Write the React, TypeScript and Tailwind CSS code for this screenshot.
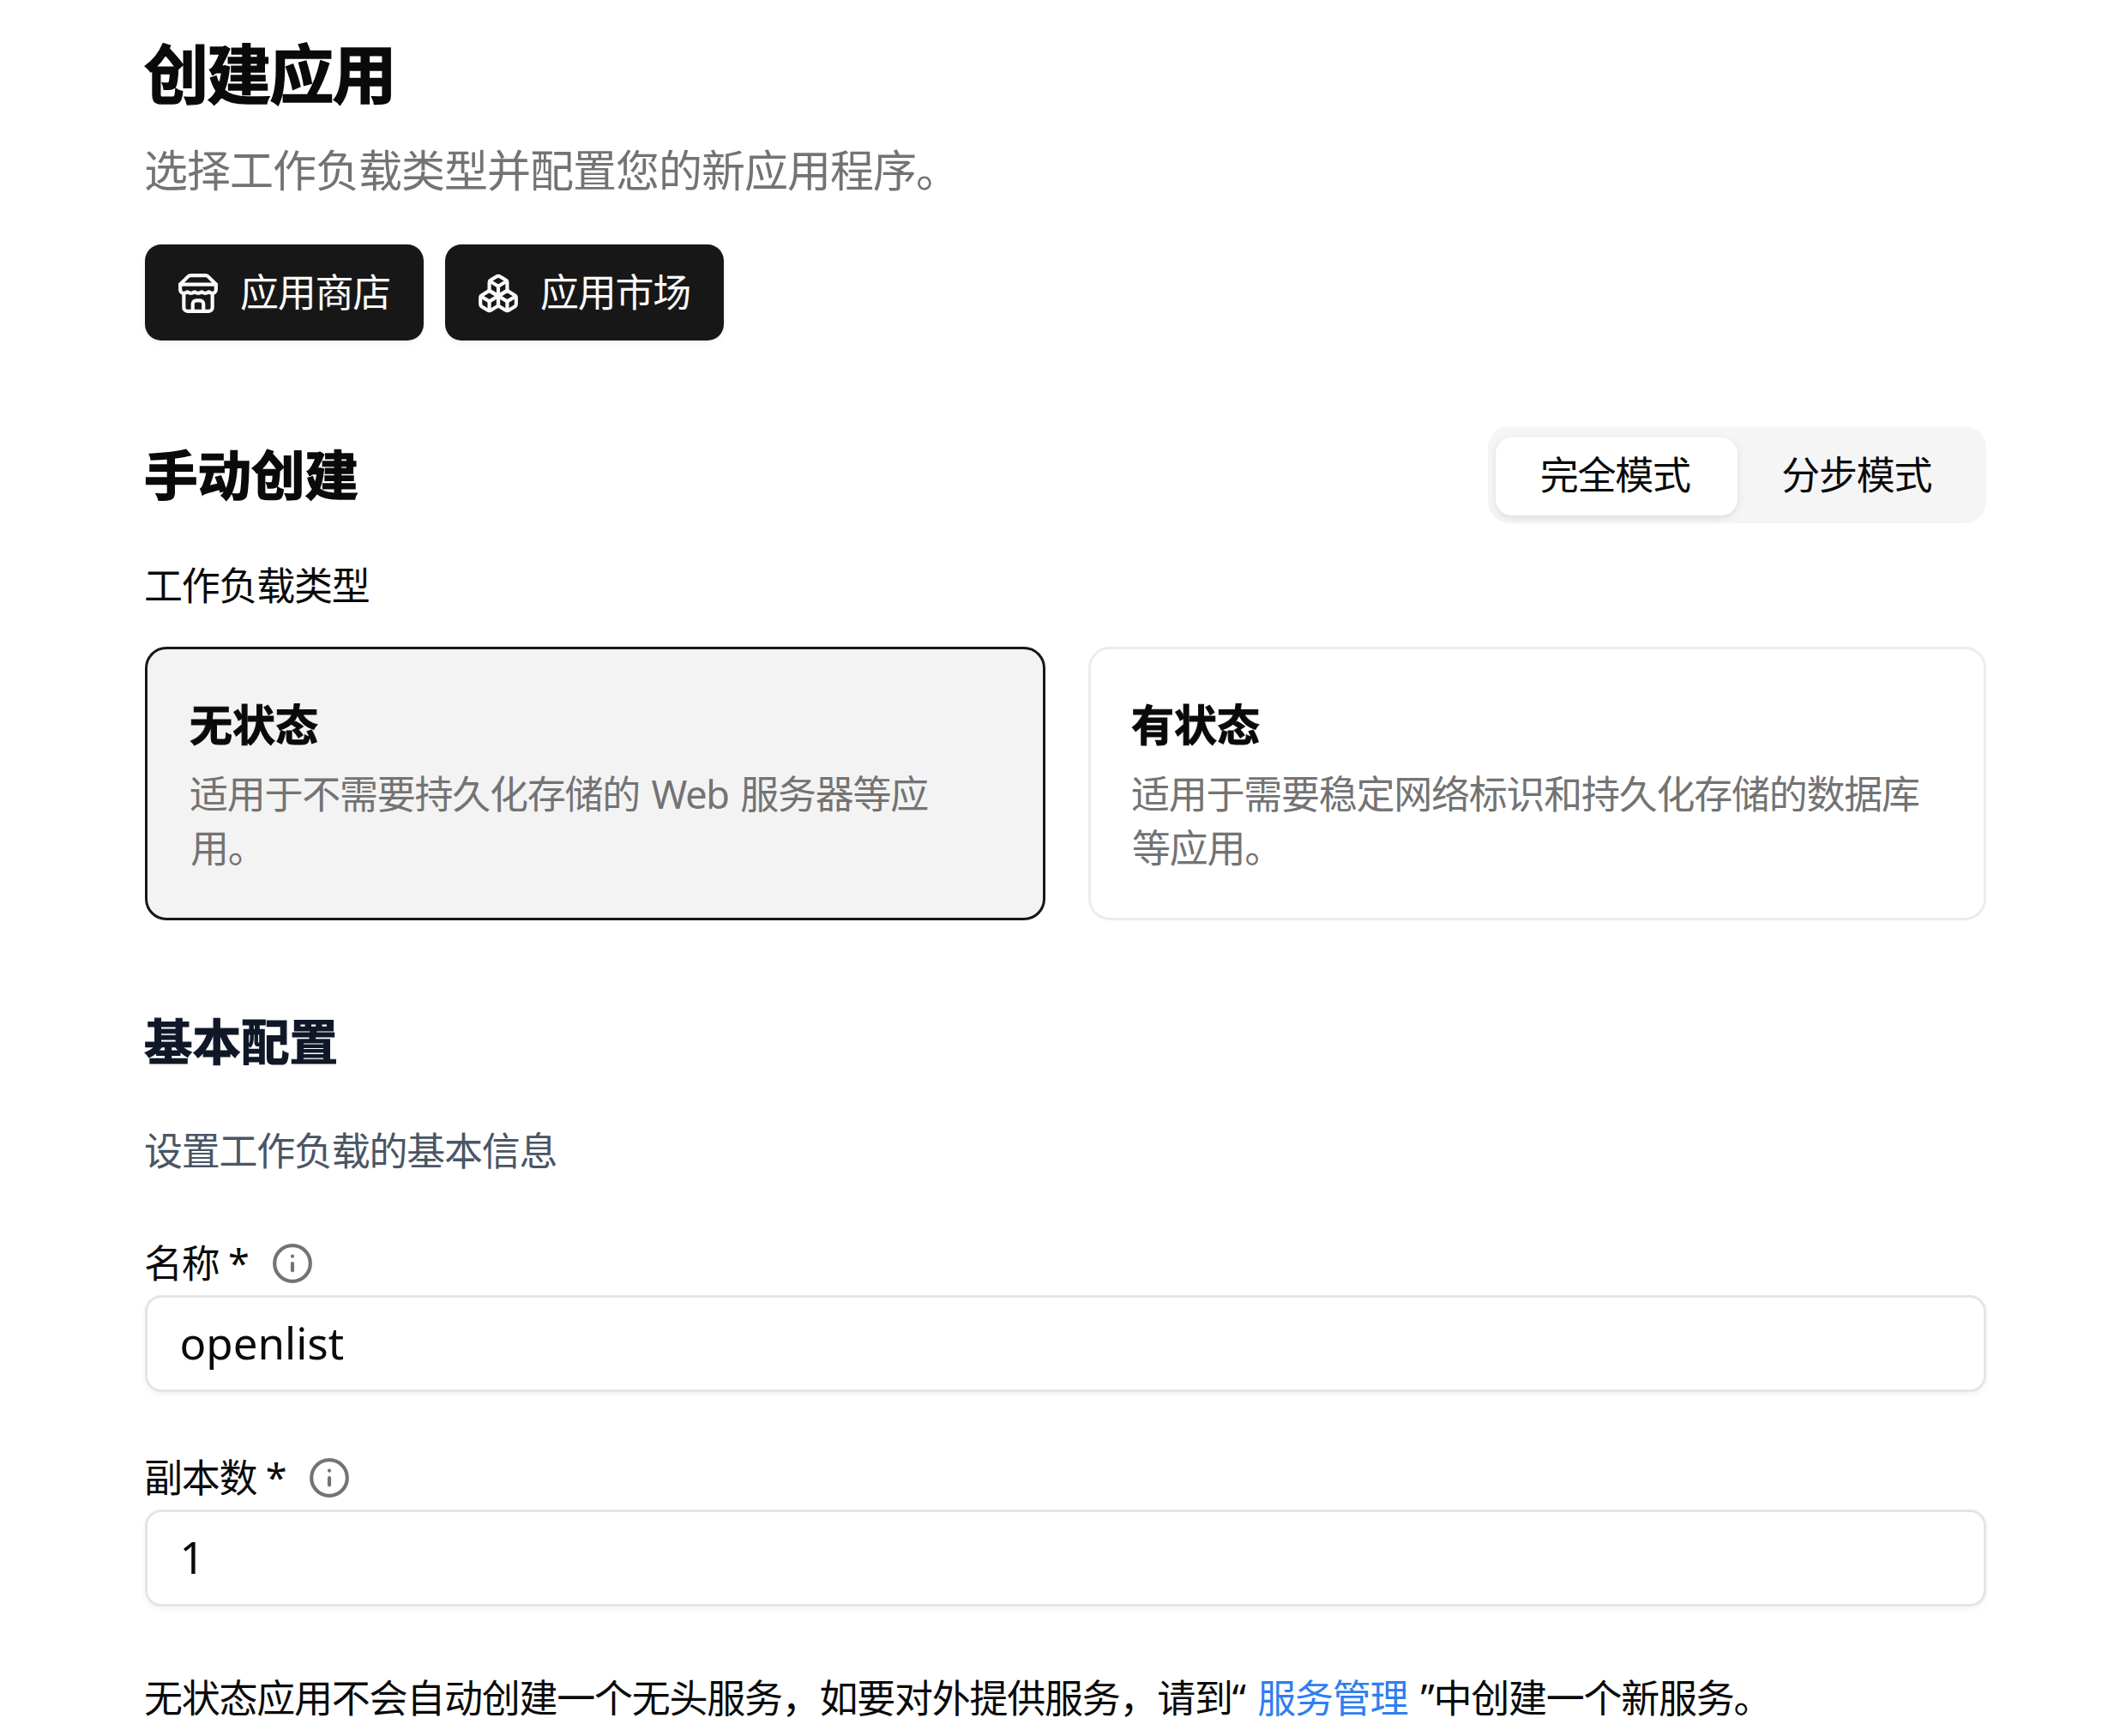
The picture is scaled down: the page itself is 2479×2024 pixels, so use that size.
import { useState } from "react";
import type { ReactNode } from "react";
import { Boxes, Info } from "lucide-react";

const workloadTypes = [
  {
    id: "stateless",
    title: "无状态",
    description: "适用于不需要持久化存储的 Web 服务器等应用。",
  },
  {
    id: "stateful",
    title: "有状态",
    description: "适用于需要稳定网络标识和持久化存储的数据库等应用。",
  },
];

const modes = ["完全模式", "分步模式"];

function StoreIcon() {
  return (
    <svg
      viewBox="0 0 24 24"
      fill="none"
      stroke="currentColor"
      strokeWidth="2"
      strokeLinecap="round"
      strokeLinejoin="round"
      className="size-[50px]"
    >
      <path d="m2 7 4.41-4.41A2 2 0 0 1 7.83 2h8.34a2 2 0 0 1 1.42.59L22 7" />
      <path d="M4 12v8a2 2 0 0 0 2 2h12a2 2 0 0 0 2-2v-8" />
      <path d="M15 22v-4a2 2 0 0 0-2-2h-2a2 2 0 0 0-2 2v4" />
      <path d="M2 7h20" />
      <path d="M22 7v3a2 2 0 0 1-2 2a2.7 2.7 0 0 1-1.59-.63.7.7 0 0 0-.82 0A2.7 2.7 0 0 1 16 12a2.7 2.7 0 0 1-1.59-.63.7.7 0 0 0-.82 0A2.7 2.7 0 0 1 12 12a2.7 2.7 0 0 1-1.59-.63.7.7 0 0 0-.82 0A2.7 2.7 0 0 1 8 12a2.7 2.7 0 0 1-1.59-.63.7.7 0 0 0-.82 0A2.7 2.7 0 0 1 4 12a2 2 0 0 1-2-2V7" />
    </svg>
  );
}

function StoreButton({ icon, children }: { icon: ReactNode; children: ReactNode }) {
  return (
    <button className="flex h-[112px] w-[325px] items-center gap-[24px] rounded-[19px] bg-neutral-900 pt-px pl-[37px] text-[45px] leading-[62.5px] tracking-[-1.25px] whitespace-nowrap text-neutral-50 shadow-[0_3px_6px_rgba(0,0,0,0.05)]">
      {icon}
      {children}
    </button>
  );
}

function Field({ label, value }: { label: string; value: string }) {
  return (
    <div className="flex flex-col gap-[12px]">
      <div className="flex h-[50px] items-center gap-[26px]">
        <label className="text-[45px] leading-[50px] tracking-[-1.25px]">{label} *</label>
        <Info size={50} strokeWidth={2} className="text-neutral-500" />
      </div>
      <input
        defaultValue={value}
        className="h-[112.5px] w-full rounded-[19px] border-[3px] border-neutral-200 bg-white px-[37.5px] pb-[4px] indent-0 text-[51px] shadow-[0_3px_6px_rgba(0,0,0,0.05)] outline-none"
      />
    </div>
  );
}

export default function App() {
  const [mode, setMode] = useState(modes[0]);
  const [type, setType] = useState("stateless");

  return (
    <main className="h-[2024px] w-[2479px] overflow-hidden bg-white pt-[36px] pr-[163px] pl-[169px] indent-[-1px] font-['Noto_Sans','Noto_Sans_CJK_SC',sans-serif] text-neutral-950">
      <h1 className="text-[75px] leading-[100px] font-bold tracking-tight [-webkit-text-stroke:1.5px]">
        创建应用
      </h1>
      <p className="mt-[25px] text-[51px] leading-[75px] tracking-[-1px] text-neutral-500">
        选择工作负载类型并配置您的新应用程序。
      </p>
      <div className="mt-[49px] flex gap-[25px]">
        <StoreButton icon={<StoreIcon />}>应用商店</StoreButton>
        <StoreButton icon={<Boxes size={50} />}>应用市场</StoreButton>
      </div>

      <div className="mt-[100px] flex h-[112.5px] items-center justify-between">
        <h2 className="text-[62.5px] leading-[87.5px] font-bold [-webkit-text-stroke:1.5px]">
          手动创建
        </h2>
        <div className="flex h-full w-[581px] items-center rounded-[25px] bg-neutral-100 px-[9px]">
          {modes.map((item) => (
            <button
              key={item}
              onClick={() => setMode(item)}
              className={`mt-[4px] flex h-[91px] flex-1 items-center justify-center rounded-[19px] pr-[3px] pb-[3px] text-[45px] tracking-[-1.25px] ${
                mode === item ? "bg-white shadow-[0_3px_9px_rgba(0,0,0,0.1)]" : ""
              }`}
            >
              {item}
            </button>
          ))}
        </div>
      </div>

      <div className="mt-[51px] text-[45px] leading-[43.75px] tracking-[-1.25px]">工作负载类型</div>
      <div className="mt-[50px] grid grid-cols-[1050px_1fr] gap-[50px]">
        {workloadTypes.map((item) => (
          <div
            key={item.id}
            onClick={() => setType(item.id)}
            className={`h-[319px] rounded-[25px] border-[3px] pt-[51px] pr-[47px] ${
              type === item.id ? "border-neutral-900 bg-[#f3f3f3] pl-[50px]" : "border-[#ececec] pl-[48px]"
            }`}
          >
            <h3 className="text-[50px] leading-[75px] font-bold [-webkit-text-stroke:1px]">{item.title}</h3>
            <p className="mt-[12px] text-[45px] leading-[62.5px] tracking-[-1.25px] [word-spacing:3px] text-neutral-500">
              {item.description}
            </p>
          </div>
        ))}
      </div>

      <h2 className="mt-[98px] text-[56.5px] leading-[87.5px] font-bold text-gray-900 [-webkit-text-stroke:1.2px]">
        基本配置
      </h2>
      <p className="mt-[52px] text-[45px] leading-[62.5px] tracking-[-1.25px] text-gray-600">
        设置工作负载的基本信息
      </p>

      <div className="mt-[75px] flex flex-col gap-[75.5px]">
        <Field label="名称" value="openlist" />
        <Field label="副本数" value="1" />
        <p className="mt-px text-[45px] leading-[62.5px] tracking-[-1.25px] [word-spacing:2px]">
          无状态应用不会自动创建一个无头服务，如要对外提供服务，请到“{" "}
          <a className="mr-[3px] ml-[2px] text-[#2f7ff0]">服务管理</a> ”中创建一个新服务。
        </p>
      </div>
    </main>
  );
}
